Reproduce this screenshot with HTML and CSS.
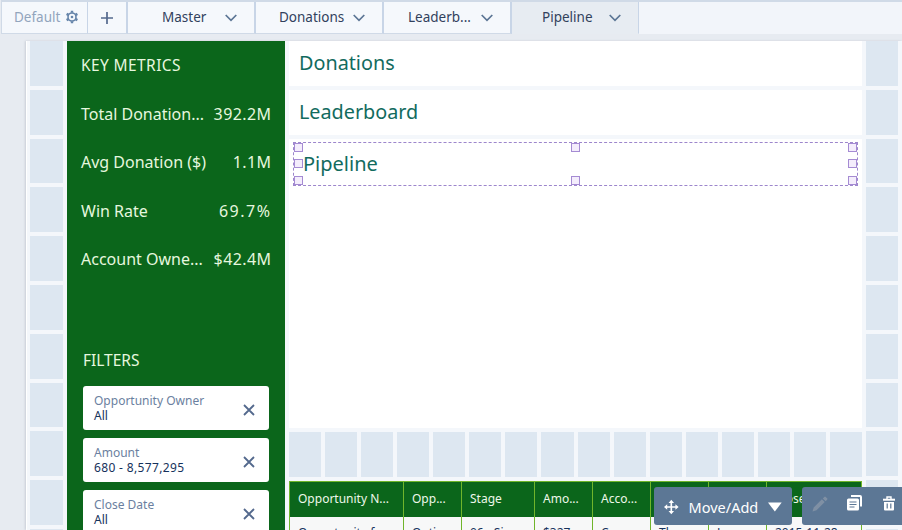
FILE: index.html
```html
<!DOCTYPE html>
<html lang="en">
<head>
    <meta charset="UTF-8">
    <meta name="viewport" content="width=device-width, initial-scale=1.0">
    <title>Dashboard Designer</title>
    <link rel="stylesheet" href="styles.css">
</head>
<body>
    <nav class="tabs">
        <div class="tab tab-default"><span class="label">Default</span>
            <svg width="14" height="14" viewBox="0 0 14 14" fill="none" stroke="#6685aa">
                <circle cx="7" cy="7" r="4" stroke-width="1.6"/>
                <circle cx="7" cy="7" r="1.3" fill="#6685aa" stroke="none"/>
                <path d="M7 .8v2M7 11.2v2M1.6 3.9l1.8 1M10.6 9.1l1.8 1M1.6 10.1l1.8-1M10.6 4.9l1.8-1" stroke-width="2.4"/>
            </svg>
        </div>
        <div class="tab tab-add">
            <svg width="12" height="12" viewBox="0 0 12 12" stroke="#54698d" stroke-width="1.7"><path d="M6 0v12M0 6h12"/></svg>
        </div>
        <div class="tab tab-master"><span class="label">Master</span><svg class="chevron" viewBox="0 0 12 8"><path d="M.7 1l5.3 5.3L11.3 1"/></svg></div>
        <div class="tab tab-donations"><span class="label">Donations</span><svg class="chevron" viewBox="0 0 12 8"><path d="M.7 1l5.3 5.3L11.3 1"/></svg></div>
        <div class="tab tab-leader"><span class="label">Leaderb...</span><svg class="chevron" viewBox="0 0 12 8"><path d="M.7 1l5.3 5.3L11.3 1"/></svg></div>
        <div class="tab tab-pipeline active"><span class="label">Pipeline</span><svg class="chevron" viewBox="0 0 12 8"><path d="M.7 1l5.3 5.3L11.3 1"/></svg></div>
    </nav>

    <div class="canvas">
        <div class="grid-column left"><i></i><i></i><i></i><i></i><i></i><i></i><i></i><i></i><i></i><i></i><i></i></div>

        <aside class="sidebar">
            <h2 class="metrics-title">KEY METRICS</h2>
            <div class="metric"><span class="label">Total Donation...</span><span class="value">392.2M</span></div>
            <div class="metric"><span class="label">Avg Donation ($)</span><span class="value">1.1M</span></div>
            <div class="metric"><span class="label">Win Rate</span><span class="value percent">69.7%</span></div>
            <div class="metric"><span class="label">Account Owne...</span><span class="value">$42.4M</span></div>
            <h2 class="filters-title">FILTERS</h2>
            <div class="filter">
                <div><p class="name">Opportunity Owner</p><p class="selected">All</p></div>
                <svg class="close" viewBox="0 0 12 12"><path d="M1 1l10 10M11 1L1 11"/></svg>
            </div>
            <div class="filter">
                <div><p class="name">Amount</p><p class="selected range">680 - 8,577,295</p></div>
                <svg class="close" viewBox="0 0 12 12"><path d="M1 1l10 10M11 1L1 11"/></svg>
            </div>
            <div class="filter">
                <div><p class="name">Close Date</p><p class="selected">All</p></div>
                <svg class="close" viewBox="0 0 12 12"><path d="M1 1l10 10M11 1L1 11"/></svg>
            </div>
        </aside>

        <main class="content">
            <div class="link">Donations</div>
            <div class="link">Leaderboard</div>
            <div class="chart-area">
                <div class="selection">
                    <span>Pipeline</span>
                    <b class="handle tl"></b><b class="handle tc"></b><b class="handle tr"></b>
                    <b class="handle ml"></b><b class="handle mr"></b>
                    <b class="handle bl"></b><b class="handle bc"></b><b class="handle br"></b>
                </div>
            </div>
            <div class="grid-row"><i></i><i></i><i></i><i></i><i></i><i></i><i></i><i></i><i></i><i></i><i></i><i></i><i></i><i></i><i></i><i></i></div>
            <div class="table">
                <div class="row head"><span>Opportunity N...</span><span>Opp...</span><span>Stage</span><span>Amo...</span><span>Acco...</span><span></span><span></span><span>Close...</span></div>
                <div class="row"><span>Opportunity f...</span><span>Opti...</span><span>06 - Si...</span><span>$327...</span><span>Corp...</span><span>Thor...</span><span>Laur...</span><span>2015-11-28</span></div>
            </div>
        </main>

        <div class="grid-column right"><i></i><i></i><i></i><i></i><i></i><i></i><i></i><i></i><i></i><i></i><i></i></div>
    </div>

    <div class="toolbar move">
        <svg width="16" height="16" viewBox="0 0 16 16" fill="none" stroke="#fff" stroke-width="1.8">
            <path d="M8 2v12M2 8h12"/>
            <path d="M8 0l3 3.500H5zM8 16l3-3.500H5zM0 8l3.500-3v6zM16 8l-3.500-3v6z" fill="#fff" stroke="none"/>
        </svg>
        <span class="label">Move/Add</span>
        <svg class="caret" width="15" height="10" viewBox="0 0 15 10" fill="#fff"><path d="M0 0h15L7.500 10z"/></svg>
    </div>
    <div class="toolbar actions">
        <svg class="pencil" width="16" height="16" viewBox="0 0 16 16" fill="#7f90a4"><path d="M.5 15.500l1.200-4 8.200-8.200 2.800 2.800-8.200 8.200zM10.800 2.400l1.500-1.500q.7-.6 1.400 0l1.400 1.400q.6.7 0 1.400l-1.500 1.500z"/></svg>
        <svg class="copy" width="15" height="16" viewBox="0 0 15 16"><path d="M4 1h9q1 0 1 1v9.500" fill="none" stroke="#fff" stroke-width="2"/><rect y="3.500" width="12" height="12" rx="1.500" fill="#fff"/><path d="M2.500 7h7M2.500 9.500h7M2.500 12h5" stroke="#5c7795" stroke-width="1.200"/></svg>
        <svg class="trash" width="12" height="15" viewBox="0 0 12 15" fill="none" stroke="#fff"><path d="M0 3.700h12" stroke-width="2"/><path d="M4 3V1h4v2" stroke-width="1.400"/><path d="M1 6h10v7.500q0 1-1 1H2q-1 0-1-1z" fill="#fff" stroke="none"/><path d="M4.200 7.500v5M7.800 7.500v5" stroke="#5c7795" stroke-width="1.200"/></svg>
    </div>
</body>
</html>
```
FILE: styles.css
```css
* {
    box-sizing: border-box;
}
body {
    margin: 0;
    width: 902px;
    height: 530px;
    overflow: hidden;
    position: relative;
    background: #e7ebf1;
    font-family: "Noto Sans", "Open Sans", sans-serif;
    color: #16325c;
}
.label {
    white-space: nowrap;
}
.tabs {
    display: flex;
    height: 34px;
    margin-left: 1px;
    border-top: 2px solid #d0dae7;
    border-left: 1px solid #d0dae7;
    background: #f2f5fa;
}
.tab {
    display: flex;
    flex: none;
    align-items: center;
    justify-content: space-between;
    width: 128px;
    height: 32px;
    padding: 0 17px 1px 34px;
    border-right: 2px solid #c8d5e7;
    border-bottom: 1px solid #d0dae7;
    background: #f5f8fc;
    font-size: 13.5px;
    color: #31415c;
}
.tab-default {
    width: 86px;
    padding: 0 8px 1px 12px;
    border-right-width: 1px;
    color: #92a5bd;
}
.tab-add {
    width: 40px;
    padding: 1px 0 0;
    justify-content: center;
}
.tab-donations {
    padding-left: 23px;
}
.tab-leader {
    padding-left: 24px;
}
.tab-pipeline {
    width: 127px;
    padding-left: 30px;
}
.tab.active {
    background: #e7ecf2;
    border-bottom-color: #e7ecf2;
    border-right-width: 1px;
}
.chevron {
    width: 12px;
    height: 8px;
    margin-top: 2px;
    fill: none;
    stroke: #5b7594;
    stroke-width: 1.7;
}
.canvas {
    display: flex;
    height: 489px;
    margin: 7px 0 0 26px;
    overflow: hidden;
    background: #f4f7fb;
    border-left: 1px solid #fff;
    box-shadow: -1px 0 2px #c9ced6;
}
.grid-column {
    display: flex;
    flex-direction: column;
    gap: 4px;
    flex: none;
    width: 33px;
}
.grid-column i {
    flex: none;
    height: 44.8px;
    background: #dde7f1;
}
.left {
    margin: 0 4px 0 3px;
}
.right {
    margin: 0 4px;
    width: 32px;
}
.sidebar {
    flex: none;
    width: 218px;
    background: #0b661b;
    color: #e6f7df;
}
h2 {
    margin: 0;
    font-size: 15.5px;
    font-weight: normal;
}
.metrics-title {
    height: 49px;
    padding-left: 14px;
    line-height: 49px;
    letter-spacing: 0.4px;
}
.metric {
    display: flex;
    justify-content: space-between;
    height: 48.4px;
    padding: 0 14px;
    line-height: 48px;
    font-size: 16px;
}
.value {
    letter-spacing: 0.4px;
    margin-right: -0.4px;
}
.value.percent {
    letter-spacing: 1.5px;
    margin-right: -0.5px;
}
.filters-title {
    height: 102.4px;
    padding: 64px 0 0 16px;
    line-height: 24px;
}
.filter {
    display: flex;
    justify-content: space-between;
    align-items: center;
    height: 44px;
    margin: 0 16px 8px;
    padding: 0 14px 0 11px;
    border-radius: 3px;
    background: #fff;
    color: #16325c;
}
.filter p {
    margin: 0;
    font-size: 12px;
    line-height: 15px;
}
.filter .name {
    color: #6b7fa0;
}
.filter .range {
    letter-spacing: 0.35px;
}
.close {
    width: 12px;
    height: 12px;
    margin-top: 4px;
    fill: none;
    stroke: #54698d;
    stroke-width: 1.8;
}
.content {
    flex: none;
    width: 573px;
    margin-left: 4px;
}
.link {
    height: 45px;
    margin-bottom: 4px;
    padding-left: 10px;
    background: #fff;
    line-height: 43px;
    font-size: 19.8px;
    color: #126b5e;
}
.chart-area {
    height: 289px;
    padding: 3px 4px 0;
    background: #fff;
}
.selection {
    position: relative;
    height: 44px;
    padding-left: 9px;
    border: 1px dashed #9d86cc;
    line-height: 42px;
    font-size: 20px;
    color: #126b5e;
}
.handle {
    position: absolute;
    width: 9px;
    height: 9px;
    border: 1px solid #a58bd3;
    background: #f4edfc;
}
.tl, .tc, .tr { top: 0; }
.ml, .mr { top: 16px; }
.bl, .bc, .br { bottom: 0; }
.tl, .ml, .bl { left: 0; }
.tc, .bc { left: 277px; }
.tr, .mr, .br { right: 0; }
.grid-row {
    display: flex;
    gap: 4px;
    height: 45px;
    margin: 4px 0;
}
.grid-row i {
    flex: 1;
    background: #dde7f1;
}
.table {
    border-left: 1px solid #70b52b;
    border-top: 1px solid #70b52b;
}
.row {
    display: grid;
    grid-template-columns: 114px 58px 73px 58px 58px 58px 58px 95px;
    height: 35px;
    background: #f7f8f8;
    font-size: 12px;
}
.row span {
    height: 35px;
    overflow: hidden;
    padding-left: 8px;
    border-right: 1px solid #70b52b;
    line-height: 32px;
    white-space: nowrap;
}
.row.head {
    background: #0b661b;
    color: #eef8ea;
}
.row.head span {
    line-height: 34px;
}
.toolbar {
    position: absolute;
    top: 487px;
    display: flex;
    align-items: center;
    height: 38px;
    border-radius: 3px;
    background: #5c7795;
}
.move {
    left: 654px;
    width: 138px;
    padding: 2px 10px 0;
    color: #fff;
    font-size: 14.5px;
}
.move .label {
    margin: 0 10px 1px;
}
.actions {
    left: 802px;
    width: 110px;
    padding-left: 10px;
}
.pencil {
    margin-bottom: 5px;
}
.copy {
    margin: 0 21px 6px 19px;
}
.trash {
    margin-bottom: 6px;
}
```
